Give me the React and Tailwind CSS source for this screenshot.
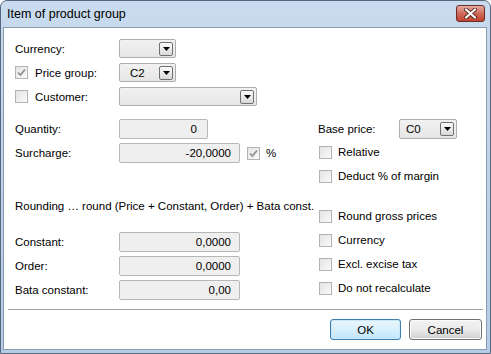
import React from "react"

const Check = ({ checked }) => (
  <span className="flex h-[13px] w-[13px] shrink-0 items-center justify-center border border-[#b3b3b3] bg-linear-to-br from-[#e4e4e4] to-[#fafafa]">
    {checked && (
      <svg width="9" height="9" viewBox="0 0 9 9">
        <path d="M1 4.5 L3.4 7 L8 1.5" stroke="#8e8e8e" strokeWidth="1.7" fill="none" />
      </svg>
    )}
  </span>
)

const Combo = ({ value, className, textClass = "pl-[10px]" }) => (
  <div className={`flex items-center justify-between rounded-[2px] border border-[#adadad] bg-linear-to-b from-[#f2f2f2] to-[#e6e6e6] pr-[2px] ${className}`}>
    <span className={textClass}>{value}</span>
    <span className="flex h-[14px] w-[14px] items-center justify-center rounded-[2px] border border-[#707070] bg-linear-to-b from-[#fbfbfb] to-[#d9d9d9]">
      <svg width="7" height="4" viewBox="0 0 7 4">
        <path d="M0 0h7L3.5 4z" fill="#000" />
      </svg>
    </span>
  </div>
)

const Field = ({ value, className }) => (
  <div className={`flex h-[20px] items-center justify-end rounded-[2px] border border-[#b8b8b8] bg-[#efefef] pr-[8px] ${className}`}>
    {value}
  </div>
)

const CheckRow = ({ label, className = "" }) => (
  <div className={`flex h-[24px] items-center gap-[6px] pl-[1px] ${className}`}>
    <Check />
    <span>{label}</span>
  </div>
)

const App = () => {
  return (
    <div className="h-[354px] w-[491px] overflow-hidden bg-white font-['Liberation_Sans',Arial,sans-serif] text-[11.5px] leading-[14px] text-black">
      <div className="flex h-full flex-col rounded-t-[7px] border border-[#56687d] bg-linear-to-b from-[#c9dbee] via-[#bdd3ea] to-[#b4cce7] pb-[3px] pl-[2px] pr-[3px]">
        {/* title bar */}
        <div className="flex h-[26px] shrink-0 items-start justify-between">
          <span className="pl-[4px] pt-[6px] text-[12.5px] leading-[15px]">Item of product group</span>
          <div className="mr-[2px] mt-[4px] flex h-[17px] w-[29px] items-center justify-center rounded-[3px] border border-[#6b2c26] bg-linear-to-b from-[#e4aba1] via-[#cf6a5b] to-[#c2432f]">
            <svg width="13" height="11" viewBox="0 0 13 11">
              <path d="M2 1.5 L11 9.5 M11 1.5 L2 9.5" stroke="#5b2a25" strokeWidth="4" strokeLinecap="round" />
              <path d="M2 1.5 L11 9.5 M11 1.5 L2 9.5" stroke="#ffffff" strokeWidth="2.2" strokeLinecap="round" />
            </svg>
          </div>
        </div>

        {/* client */}
        <div className="flex flex-1 flex-col border border-[#8a9bb0] bg-white">
          <div className="flex h-[281px] shrink-0">
            {/* left column */}
            <div className="flex w-[314px] flex-col pl-[11px] pt-[11px]">
              <div className="flex h-[19px] items-center">
                <span className="w-[104px]">Currency:</span>
                <Combo className="h-[19px] w-[57px]" />
              </div>
              <div className="mt-[5px] flex h-[19px] items-center">
                <div className="flex w-[104px] items-center gap-[7px]">
                  <Check checked />
                  <span>Price group:</span>
                </div>
                <Combo value="C2" className="h-[19px] w-[57px]" />
              </div>
              <div className="mt-[5px] flex h-[19px] items-center">
                <div className="flex w-[104px] items-center gap-[7px]">
                  <Check />
                  <span>Customer:</span>
                </div>
                <Combo className="h-[19px] w-[138px]" />
              </div>
              <div className="mt-[13px] flex items-center">
                <span className="w-[104px]">Quantity:</span>
                <Field value="0" className="w-[89px] pr-[10px]" />
              </div>
              <div className="mt-[4px] flex items-center">
                <span className="w-[104px]">Surcharge:</span>
                <Field value="-20,0000" className="w-[121px]" />
                <div className="ml-[7px] flex items-center gap-[6px]">
                  <Check checked />
                  <span>%</span>
                </div>
              </div>
              <div className="mt-[36px] h-[14px]">Rounding … round (Price + Constant, Order) + Bata const.</div>
              <div className="mt-[19px] flex items-center">
                <span className="w-[104px]">Constant:</span>
                <Field value="0,0000" className="w-[121px]" />
              </div>
              <div className="mt-[4px] flex items-center">
                <span className="w-[104px]">Order:</span>
                <Field value="0,0000" className="w-[121px]" />
              </div>
              <div className="mt-[4px] flex items-center">
                <span className="w-[104px]">Bata constant:</span>
                <Field value="0,00" className="w-[121px]" />
              </div>
            </div>

            {/* right column */}
            <div className="flex flex-1 flex-col pt-[91px]">
              <div className="flex h-[20px] items-center">
                <span className="w-[81px]">Base price:</span>
                <Combo value="C0" className="h-[20px] w-[58px]" textClass="pl-[6px]" />
              </div>
              <CheckRow label="Relative" className="mt-[1px]" />
              <CheckRow label="Deduct % of margin" />
              <CheckRow label="Round gross prices" className="mt-[16px]" />
              <CheckRow label="Currency" />
              <CheckRow label="Excl. excise tax" />
              <CheckRow label="Do not recalculate" />
            </div>
          </div>

          <div className="ml-[4px] mr-[3px] h-px bg-[#a0a0a0]" />

          <div className="flex justify-end gap-[8px] pr-[4px] pt-[9px]">
            <button className="flex h-[21px] w-[71px] items-center justify-center rounded-[3px] border border-[#3c7fb1] bg-linear-to-b from-[#eaf6fd] via-[#d9f0fc] to-[#bee6fd] shadow-[inset_0_0_0_1px_#c8e9fa]">
              OK
            </button>
            <button className="flex h-[21px] w-[73px] items-center justify-center rounded-[3px] border border-[#707070] bg-linear-to-b from-[#f2f2f2] via-[#ebebeb] to-[#cfcfcf] shadow-[inset_0_0_0_1px_#fbfbfb]">
              Cancel
            </button>
          </div>
        </div>
      </div>
    </div>
  )
}

export default App
